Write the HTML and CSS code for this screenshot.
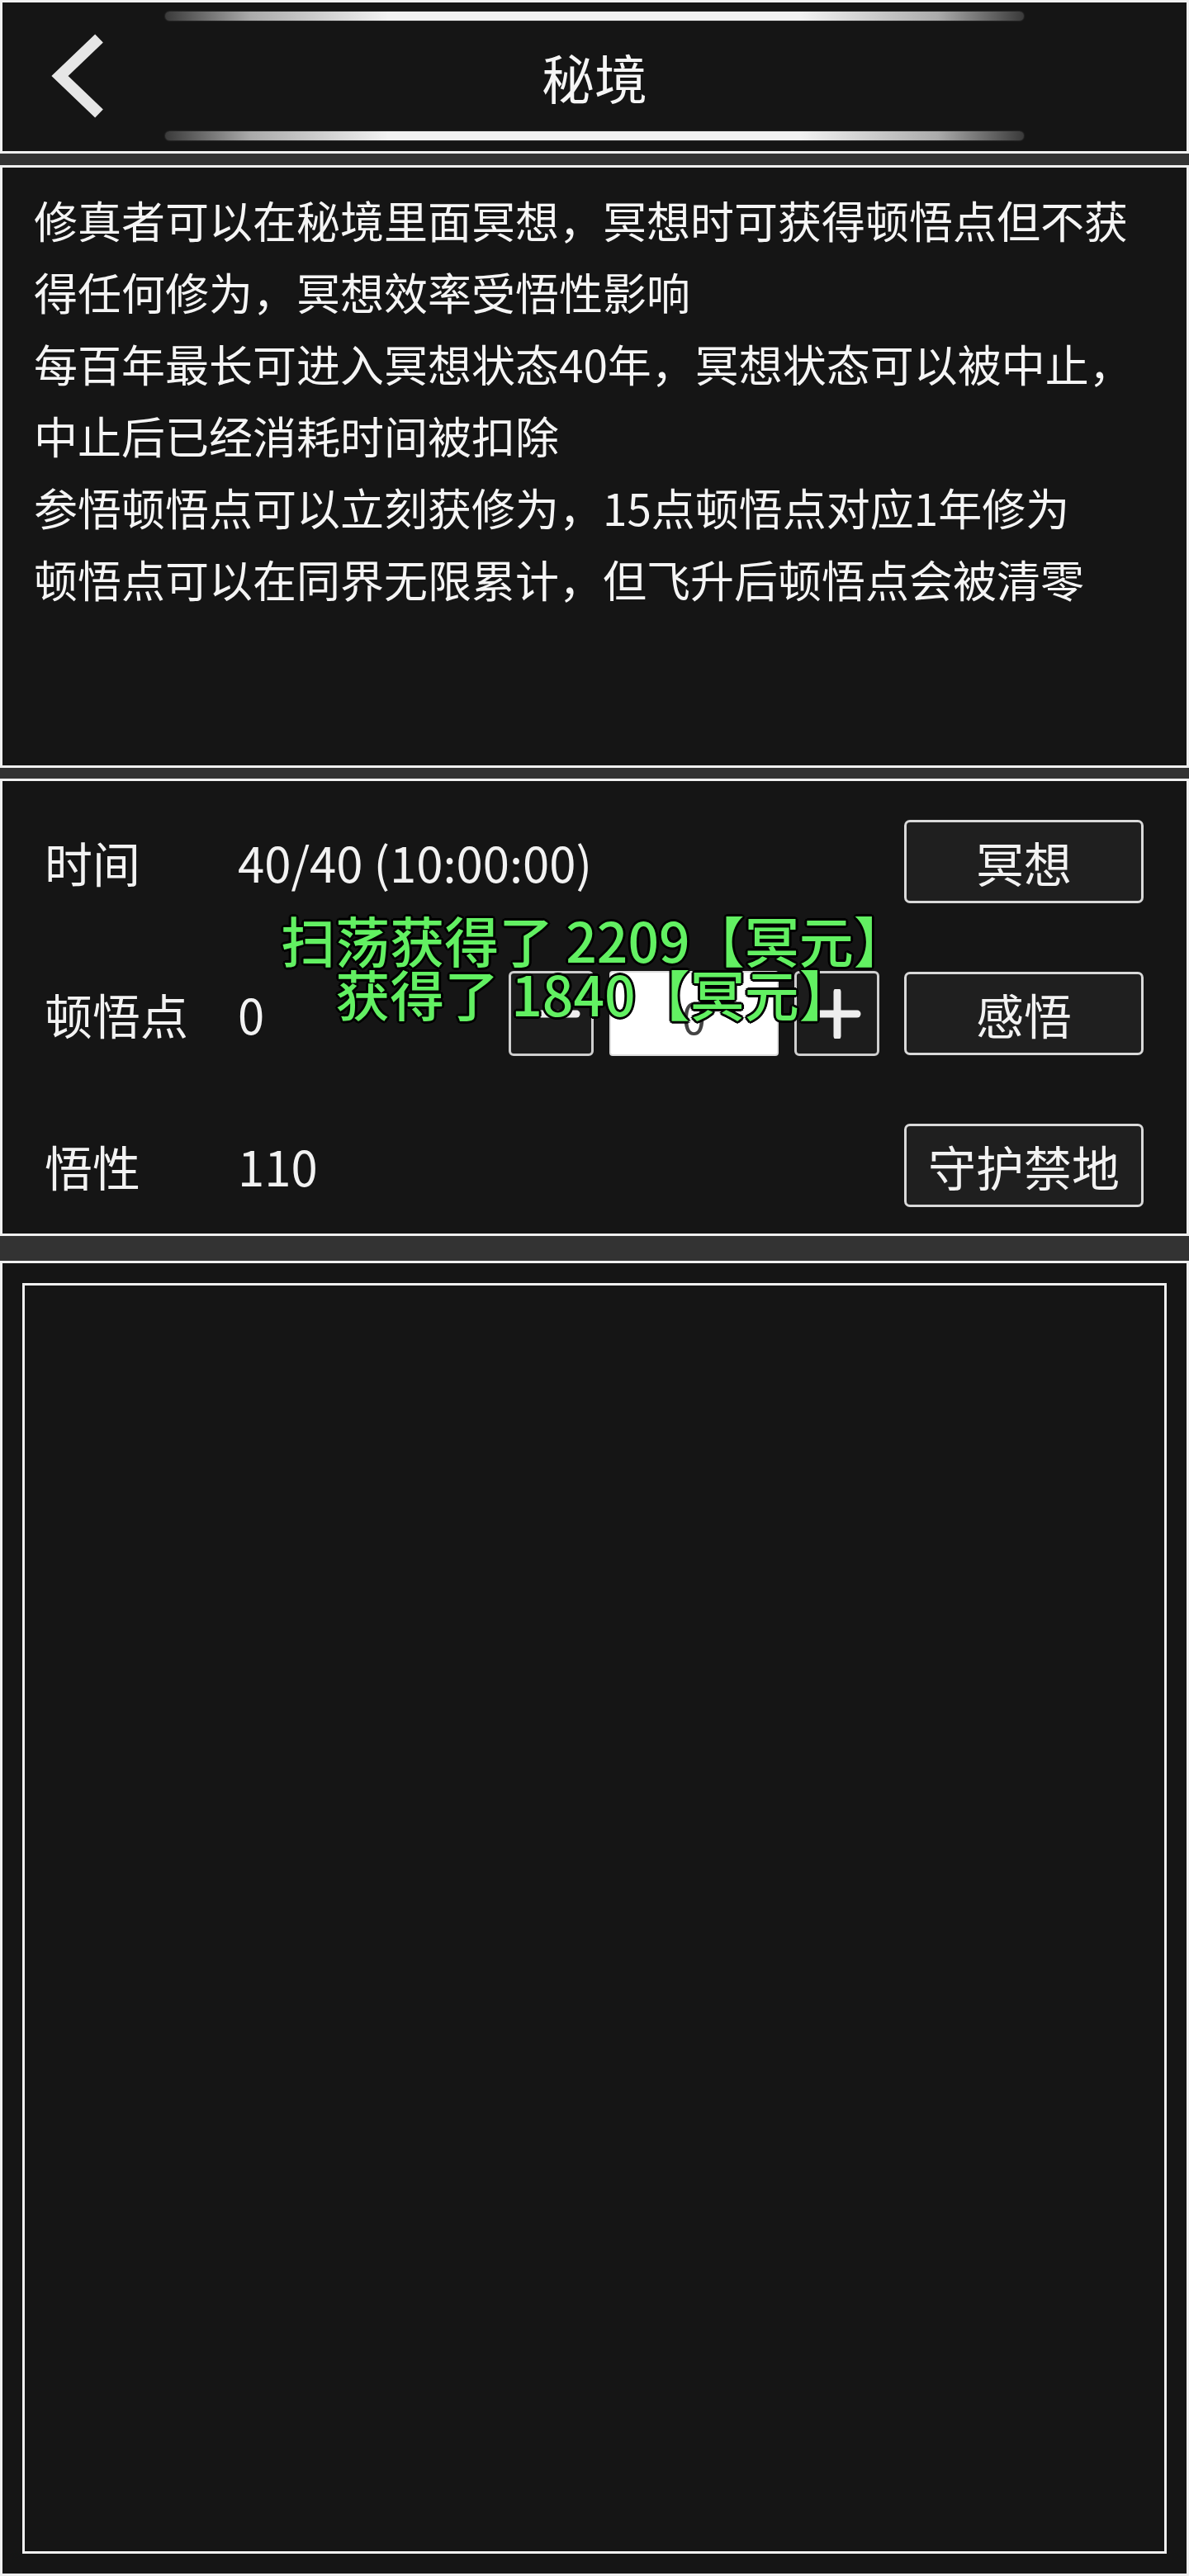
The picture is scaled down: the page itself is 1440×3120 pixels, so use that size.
FILE: index.html
```html
<!DOCTYPE html>
<html lang="zh-CN">
<head>
    <meta charset="UTF-8">
    <meta name="viewport" content="width=device-width, initial-scale=1.0">
    <title>秘境</title>
    <link rel="stylesheet" href="styles.css">
</head>
<body>
    <div class="page">
        <!-- top bar -->
        <header class="panel header">
            <div class="glow"></div>
            <div class="title-bar">
                <a class="back" href="#">
                    <svg width="80" height="110" viewBox="0 0 80 110">
                        <polyline points="70,9.5 22.5,55 70,100.5" fill="none" stroke="#e6e6e6" stroke-width="14" stroke-linejoin="miter"/>
                    </svg>
                </a>
                <h1 class="title">秘境</h1>
                <div></div>
            </div>
            <div class="glow"></div>
        </header>

        <!-- rules -->
        <section class="panel desc">
            <p>修真者可以在秘境里面冥想，冥想时可获得顿悟点但不获得任何修为，冥想效率受悟性影响</p>
            <p>每百年最长可进入冥想状态40年，冥想状态可以被中止，中止后已经消耗时间被扣除</p>
            <p>参悟顿悟点可以立刻获修为，15点顿悟点对应1年修为</p>
            <p>顿悟点可以在同界无限累计，但飞升后顿悟点会被清零</p>
        </section>

        <!-- controls -->
        <section class="panel controls">
            <div class="row">
                <span class="label">时间</span>
                <span class="value">40/40 (10:00:00)</span>
                <button class="btn">冥想</button>
            </div>
            <div class="row">
                <span class="label">顿悟点</span>
                <span class="value">0</span>
                <div class="stepper">
                    <button class="step">
                        <svg width="70" height="20" viewBox="0 0 70 20"><line x1="5" y1="10" x2="65" y2="10" stroke="#eee" stroke-width="9" stroke-linecap="round"/></svg>
                    </button>
                    <div class="amount">0</div>
                    <button class="step">
                        <svg width="60" height="60" viewBox="0 0 60 60"><line x1="6" y1="30" x2="54" y2="30" stroke="#eee" stroke-width="9" stroke-linecap="round"/><line x1="30" y1="3" x2="30" y2="57" stroke="#eee" stroke-width="9" stroke-linecap="round"/></svg>
                    </button>
                </div>
                <button class="btn">感悟</button>
            </div>
            <div class="row">
                <span class="label">悟性</span>
                <span class="value">110</span>
                <button class="btn">守护禁地</button>
            </div>

            <div class="toast">
                <div>扫荡获得了 2209【冥元】</div>
                <div>获得了 1840【冥元】</div>
            </div>
        </section>

        <!-- log -->
        <section class="panel log">
            <div class="log-box"></div>
        </section>
    </div>
</body>
</html>
```

FILE: styles.css
```css
body {
    margin: 0;
    background-color: #333;
    font-family: "Noto Sans CJK SC", "Noto Sans", sans-serif;
    color: #f2f2f2;
}

.page {
    width: 1440px;
    height: 3120px;
    display: flex;
    flex-direction: column;
}

.panel {
    background-color: #151515;
    border: 3px solid #f0f0f0;
    box-sizing: border-box;
}

/* header */
.header {
    height: 186px;
    display: flex;
    flex-direction: column;
}

.glow {
    height: 11px;
    margin: 11px 197px 0;
    border-radius: 6px;
    background: linear-gradient(to right, #3a3a3a, #aaa 10%, #f2f2f2 26%, #f2f2f2 74%, #aaa 90%, #3a3a3a);
    box-shadow: 0 0 2px rgba(255, 255, 255, 0.25);
}

.glow:last-child {
    margin-top: 0;
}

.title-bar {
    height: 134px;
    display: grid;
    grid-template-columns: 1fr auto 1fr;
    align-items: center;
}

.back {
    display: block;
    width: 80px;
    height: 110px;
    margin-left: 47px;
}

.title {
    margin: 0;
    font-size: 64px;
    font-weight: 400;
    color: #f5f5f5;
    line-height: 1;
}

/* description */
.desc {
    height: 730px;
    margin-top: 14px;
    padding: 20px 56px 0 38px;
}

.desc p {
    margin: 0;
    font-size: 53px;
    line-height: 87px;
    color: #f5f5f5;
}

/* controls */
.controls {
    position: relative;
    height: 554px;
    margin-top: 13px;
    padding: 47px 52px 0 51px;
    display: flex;
    flex-direction: column;
    gap: 83px;
}

.row {
    height: 101px;
    display: flex;
    align-items: center;
    font-size: 58px;
}

.label {
    width: 234px;
}

.value {
    flex: 1;
}

.btn {
    width: 290px;
    height: 101px;
    margin-left: 30px;
    padding: 0;
    background-color: #1f1f1f;
    border: 3px solid #d9d9d9;
    border-radius: 7px;
    color: #f2f2f2;
    font-family: inherit;
    font-size: 58px;
    line-height: 1;
}

.stepper {
    display: flex;
    gap: 19px;
}

.step {
    width: 103px;
    height: 103px;
    padding: 0;
    background-color: #1c1c1c;
    border: 3px solid #cfcfcf;
    border-radius: 6px;
    display: flex;
    align-items: center;
    justify-content: center;
}

.amount {
    width: 205px;
    height: 103px;
    background-color: #fff;
    border: 2px solid #ddd;
    border-radius: 4px;
    box-sizing: border-box;
    color: #444;
    font-size: 52px;
    display: flex;
    align-items: center;
    justify-content: center;
    padding-top: 6px;
}

/* floating reward message */
.toast {
    position: absolute;
    top: 159px;
    left: 0;
    right: 0;
    text-align: center;
    font-size: 66px;
    font-weight: 500;
    line-height: 65px;
    color: #62f062;
    text-shadow: -3px 0 #000, 3px 0 #000, 0 -3px #000, 0 3px #000,
        -2px -2px #000, 2px -2px #000, -2px 2px #000, 2px 2px #000;
    pointer-events: none;
}

/* log */
.log {
    flex: 1;
    margin-top: 30px;
    padding: 24px;
    display: flex;
}

.log-box {
    flex: 1;
    border: 3px solid #f0f0f0;
}
```
